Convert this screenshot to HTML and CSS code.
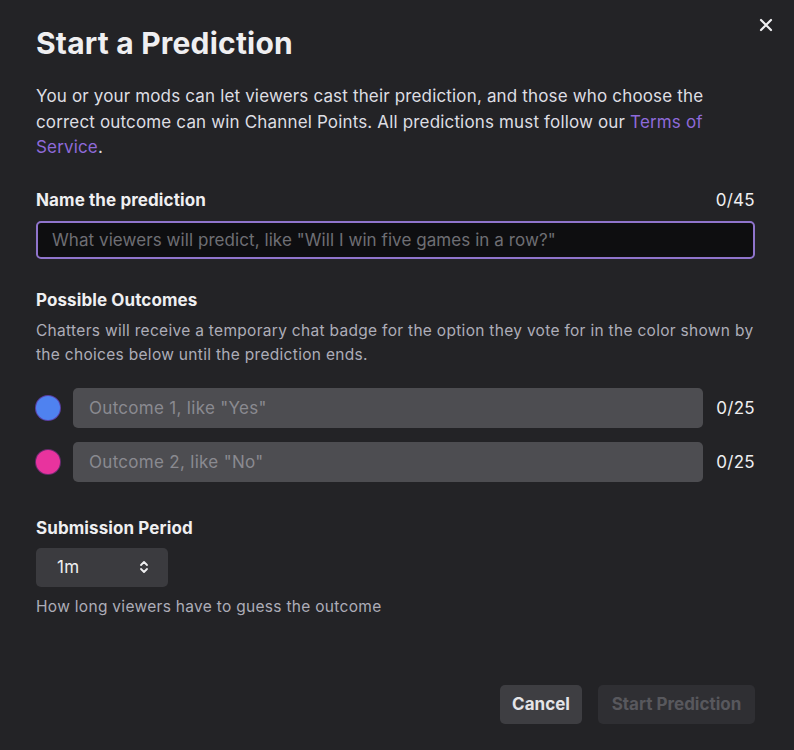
FILE: index.html
```html
<!DOCTYPE html>
<html>
<head>
<meta charset="utf-8">
<link rel="stylesheet" href="styles.css">
</head>
<body>
<div class="modal">
  <button class="close" aria-label="Close">
    <svg width="14" height="14" viewBox="0 0 14 14"><path d="M2 2 L12 12 M12 2 L2 12" stroke="#efeff1" stroke-width="2.2" stroke-linecap="round"/></svg>
  </button>
  <h1 class="title">Start a Prediction</h1>
  <p class="intro">You or your mods can let viewers cast their prediction, and those who choose the correct outcome can win Channel Points. All predictions must follow our <a class="link" href="#">Terms of Service</a>.</p>

  <div class="field-head">
    <span class="label">Name the prediction</span>
    <span class="count">0/45</span>
  </div>
  <div class="name-input">What viewers will predict, like "Will I win five games in a row?"</div>

  <h2 class="label section">Possible Outcomes</h2>
  <p class="desc">Chatters will receive a temporary chat badge for the option they vote for in the color shown by the choices below until the prediction ends.</p>

  <div class="outcomes">
    <div class="outcome">
      <span class="dot blue"></span>
      <div class="outcome-input">Outcome 1, like "Yes"</div>
      <span class="count">0/25</span>
    </div>
    <div class="outcome">
      <span class="dot pink"></span>
      <div class="outcome-input">Outcome 2, like "No"</div>
      <span class="count">0/25</span>
    </div>
  </div>

  <h2 class="label section2">Submission Period</h2>
  <div class="select">
    <span>1m</span>
    <svg width="10" height="16" viewBox="0 0 10 16"><path d="M2 6 L5 3 L8 6 M2 10 L5 13 L8 10" fill="none" stroke="#efeff1" stroke-width="1.8" stroke-linecap="round" stroke-linejoin="round"/></svg>
  </div>
  <p class="help">How long viewers have to guess the outcome</p>

  <div class="actions">
    <button class="btn cancel">Cancel</button>
    <button class="btn start">Start Prediction</button>
  </div>
</div>
</body>
</html>
```
FILE: styles.css
```css
* { box-sizing: border-box; }
html, body { margin: 0; padding: 0; }
body {
  background: #232326;
  font-family: Inter, "Noto Sans", sans-serif;
  color: #efeff1;
  width: 794px;
  height: 750px;
  overflow: hidden;
  letter-spacing: 0.3px;
}
.modal {
  position: relative;
  padding: 26px 39px 0 36px;
  display: flex;
  flex-direction: column;
}
.close {
  position: absolute;
  top: 18px;
  right: 21px;
  background: none;
  border: 0;
  padding: 0;
  width: 14px;
  height: 14px;
  display: flex;
}
.title {
  margin: 0;
  font-size: 30px;
  font-weight: 700;
  line-height: 34px;
  letter-spacing: 0.2px;
}
.intro {
  margin: 24px 0 0;
  font-size: 17px;
  line-height: 25.5px;
  color: #dedee3;
  letter-spacing: 0.16px;
}
.link { color: #8e6ad9; text-decoration: none; }
.field-head {
  margin-top: 28px;
  display: flex;
  justify-content: space-between;
  align-items: center;
  line-height: 22px;
}
.label {
  font-size: 17px;
  font-weight: 700;
  letter-spacing: 0.1px;
  margin: 0;
  line-height: 22px;
}
.count { font-size: 17px; color: #efeff1; line-height: 22px; }
.name-input {
  margin-top: 10px;
  height: 38px;
  border: 2px solid #8f74cc;
  border-radius: 5px;
  background: #0e0e10;
  color: #6e6e74;
  font-size: 17px;
  padding: 0 14px;
  display: flex;
  align-items: center;
  letter-spacing: 0.07px;
}
.section { margin-top: 30px; }
.desc {
  margin: 8px 0 0;
  font-size: 15.5px;
  line-height: 24px;
  color: #adadb8;
}
.outcomes {
  margin-top: 21px;
  display: flex;
  flex-direction: column;
  gap: 14px;
}
.outcome {
  display: flex;
  align-items: center;
}
.dot {
  width: 24px;
  height: 24px;
  border-radius: 50%;
  flex: none;
}
.blue { background: #4f82f0; box-shadow: 0 0 0 1px #5a3fa6; }
.pink { background: #e8339e; box-shadow: 0 0 0 1px #6a2a6e; }
.outcome-input {
  margin-left: 13px;
  flex: 1;
  height: 40px;
  background: #4d4d51;
  border-radius: 5px;
  color: #8a8a90;
  font-size: 17px;
  padding: 0 16px;
  display: flex;
  align-items: center;
}
.outcome .count { width: 52px; text-align: right; flex: none; }
.section2 { margin-top: 35px; }
.select {
  margin-top: 9px;
  width: 132px;
  height: 39px;
  background: #3b3b3f;
  border-radius: 5px;
  display: flex;
  align-items: center;
  justify-content: space-between;
  padding: 0 19px 0 21px;
  font-size: 17px;
}
.help {
  margin: 10px 0 0;
  font-size: 15.5px;
  line-height: 20px;
  color: #adadb8;
}
.actions {
  margin-top: 68px;
  display: flex;
  justify-content: flex-end;
  gap: 16px;
}
.btn {
  height: 39px;
  border: 0;
  border-radius: 5px;
  font-family: Inter, "Noto Sans", sans-serif;
  font-size: 17px;
  font-weight: 700;
  padding: 0;
  letter-spacing: 0;
}
.cancel { background: #3e3e42; color: #e4e4e8; width: 82px; }
.start { background: #2f2f33; color: #58585d; width: 157px; }
```
